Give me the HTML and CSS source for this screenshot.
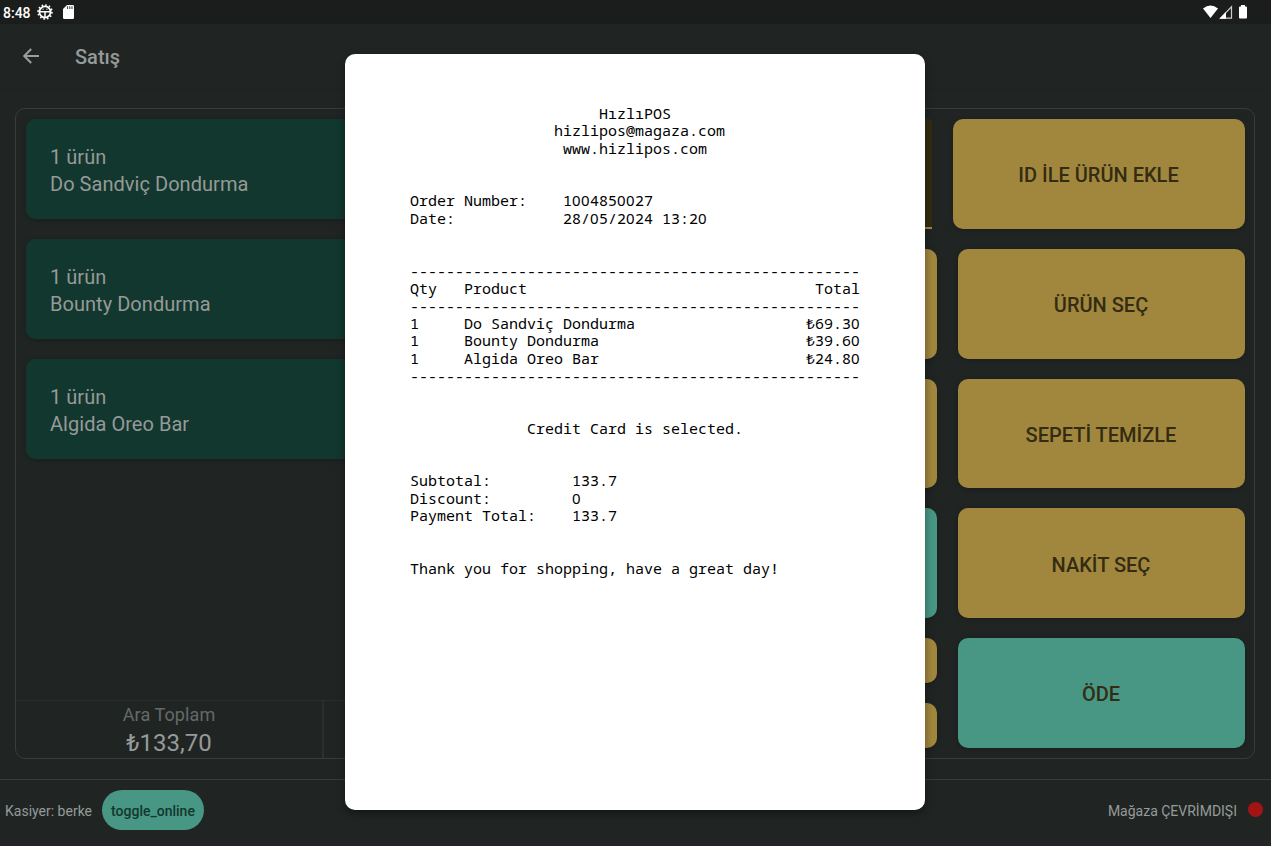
FILE: index.html
```html
<!DOCTYPE html>
<html lang="tr">
<head>
<meta charset="utf-8">
<title>Satış</title>
<link rel="stylesheet" href="styles.css">
</head>
<body>
<div class="app">
  <div class="status">
    <span class="clock">8:48</span>
    <svg class="gear" width="16" height="16" viewBox="0 0 16 16"><circle cx="8" cy="8" r="7" fill="none" stroke="#fff" stroke-width="1.600" stroke-dasharray="1.600 2.065"/><circle cx="8" cy="8" r="5.600" fill="none" stroke="#fff" stroke-width="1.800"/><path d="M2.500 7.800h11M8 8v5.500" stroke="#fff" stroke-width="1.500"/><path d="M5.500 5.200h1.200M9.300 5.200h1.200" stroke="#fff" stroke-width="1"/></svg>
    <svg class="sd" width="11" height="14" viewBox="0 0 11 14"><path d="M4 0h5.700Q11 0 11 1.300v11.400q0 1.300-1.300 1.300H1.300Q0 14 0 12.700V4z" fill="#fff"/><path d="M4.500 1.300v2.700M6.800 1.300v2.700M9 1.300v2.700" stroke="#444" stroke-width="1.100"/></svg>
    <svg class="signals" width="46" height="14" viewBox="0 0 46 14"><path d="M0 3.500Q7.500-2.500 15 3.500L7.500 13z" fill="#fff"/><path d="M17.500 13.200L28.500 1.800V13.200z" fill="none" stroke="#ccc" stroke-width="1.200"/><path d="M16.500 13.800L23 7v6.800z" fill="#fff"/><path d="M36 2.500q0-1 1-1h1V0h4v1.500h1q1 0 1 1v10q0 1-1 1h-6q-1 0-1-1z" fill="#fff"/></svg>
  </div>
  <header class="bar">
    <svg width="16" height="16" viewBox="0 0 16 16"><path d="M16 8H1.400M8.200 1L1.200 8l7 7" fill="none" stroke="#9a9d9c" stroke-width="2"/></svg>
    <h1>Satış</h1>
  </header>
  <main class="panel">
    <section class="cart">
      <div class="items">
        <div class="item">1 ürün<br>Do Sandviç Dondurma</div>
        <div class="item">1 ürün<br>Bounty Dondurma</div>
        <div class="item">1 ürün<br>Algida Oreo Bar</div>
      </div>
      <div class="totals">
        <div class="total"><span>Ara Toplam</span><b>₺133,70</b></div>
        <div class="total"></div>
      </div>
    </section>
    <section class="actions">
      <div class="row first"><div class="field"></div><div class="btn">ID İLE ÜRÜN EKLE</div></div>
      <div class="row"><div class="btn"></div><div class="btn">ÜRÜN SEÇ</div></div>
      <div class="row"><div class="btn"></div><div class="btn">SEPETİ TEMİZLE</div></div>
      <div class="row"><div class="btn teal"></div><div class="btn">NAKİT SEÇ</div></div>
      <div class="row"><div class="stack"><div class="btn"></div><div class="btn"></div></div><div class="btn teal">ÖDE</div></div>
    </section>
  </main>
  <footer class="foot">
    <span class="cashier">Kasiyer: berke</span>
    <span class="pill">toggle_online</span>
    <span class="store">Mağaza ÇEVRİMDIŞI</span>
    <i class="dot"></i>
  </footer>
  <div class="strip"></div>
</div>
<div class="overlay">
<div class="receipt">
  <section class="center">
    <p class="name">HızlıPOS</p>
    <p>hizlipos@magaza.com</p>
    <p class="site">www.hizlipos.com</p>
  </section>
  <section class="order">
    <p><span>Order Number:</span><span>1<i>00</i>485<i>00</i>27</span></p>
    <p><span>Date:</span><span>28/<i>0</i>5/2<i>0</i>24 13:2<i>0</i></span></p>
  </section>
  <section class="lines">
    <p class="rule">--------------------------------------------------</p>
    <p><span>Qty</span><span>Product</span><span>Total</span></p>
    <p class="rule">--------------------------------------------------</p>
    <p><span>1</span><span>Do Sandviç Dondurma</span><span>₺69.3<i>0</i></span></p>
    <p><span>1</span><span>Bounty Dondurma</span><span>₺39.6<i>0</i></span></p>
    <p><span>1</span><span>Algida Oreo Bar</span><span>₺24.8<i>0</i></span></p>
    <p class="rule">--------------------------------------------------</p>
  </section>
  <section class="pay"><p>Credit Card is selected.</p></section>
  <section class="sums">
    <p><span>Subtotal:</span><span>133.7</span></p>
    <p><span>Discount:</span><span><i>0</i></span></p>
    <p><span>Payment Total:</span><span>133.7</span></p>
  </section>
  <section><p>Thank you for shopping, have a great day!</p></section>
</div>
</div>
</body>
</html>
```
FILE: styles.css
```css
* { box-sizing: border-box; }
body { margin: 0; background: #202524; font-family: Roboto, sans-serif; color: #969a98; overflow: hidden; }
.app { height: 846px; display: flex; flex-direction: column; }
.status { height: 24px; flex: none; background: #1b1d1c; color: #fff; display: flex; align-items: center; padding: 0 22px 0 3px; }
.clock { font-size: 14px; font-weight: 500; line-height: 24px; padding-top: 1px; }
.gear { margin-left: 6px; }
.sd { margin-left: 10px; }
.signals { margin-left: auto; }
.bar { height: 65px; flex: none; display: flex; align-items: center; padding-left: 23px; border-bottom: 1px solid #1e2322; }
.bar h1 { margin: 2px 0 0 36px; font-size: 20px; font-weight: 500; line-height: 24px; }
.panel { flex: none; margin: 19px 16px 0 15px; height: 651px; border: 1px solid #363d3b; border-radius: 10px; display: flex; }
.cart { width: 614px; display: flex; flex-direction: column; }
.items { flex: 1; display: flex; flex-direction: column; gap: 20px; padding: 10px; }
.item { height: 100px; background: #12372e; border-radius: 9px; padding: 25px 24px 0; font-size: 20px; letter-spacing: .04px; line-height: 27px; box-shadow: 0 1px 5px rgba(0,0,0,.25); }
.totals { height: 58px; display: flex; border-top: 1px solid #2b302f; }
.total { flex: 1; display: flex; flex-direction: column; align-items: center; border-right: 2px solid #2b302f; }
.total:last-child { border-right: 0; }
.total span { font-size: 18px; line-height: 27px; color: #656a68; letter-spacing: .1px; }
.total b { font-size: 24px; font-weight: 400; line-height: 31px; }
.actions { flex: 1; display: flex; flex-direction: column; gap: 20px; padding: 10px 9.500px 10px 10px; }
.row { flex: 1; display: grid; grid-template-columns: 1fr 287px; gap: 20.500px; }
.row.first { grid-template-columns: 1fr 292px; }
.btn { background: #a1873e; color: #332c12; border-radius: 10px; display: flex; align-items: center; justify-content: center; padding-top: 2.800px; font-size: 20px; font-weight: 500; box-shadow: 0 1px 5px rgba(0,0,0,.25); }
.btn.teal { background: #479784; }
.field { background: #332c12; border-bottom: 2px solid #a1873e; border-radius: 4px 4px 0 0; }
.stack { display: grid; grid-template-rows: 1fr 1fr; gap: 20px; }
.foot { margin-top: 20px; height: 61px; flex: none; border-top: 1px solid #363d3b; display: flex; align-items: center; padding: 0 8px 0 5px; font-size: 14px; }
.cashier, .store { padding-top: 2px; }
.pill { margin-left: 10px; width: 102px; height: 40px; border-radius: 20px; background: #479784; color: #12372e; font-weight: 500; line-height: 42px; text-align: center; }
.store { margin-left: auto; }
.dot { margin: -2px 0 0 11px; width: 15px; height: 15px; border-radius: 50%; background: #a31515; }
.strip { height: 6px; background: #252429; }
.overlay { position: absolute; inset: 0; display: flex; justify-content: center; padding: 54px 1px 0 0; }
.receipt { width: 580px; height: 756px; background: #fff; border-radius: 10px; padding: 50.800px 65px 0; color: #000; font-family: "Droid Sans Mono", "Noto Sans Mono", "DejaVu Sans Mono", monospace; font-size: 15px; line-height: 17.500px; box-shadow: 0 4px 8px rgba(0,0,0,.4); display: flex; flex-direction: column; gap: 35px; }
.receipt p { margin: 0; height: 17.500px; white-space: pre; display: grid; }
/* columns sit on the 9px character grid */
.center { padding-left: 144px; }
.center .name { padding-left: 45px; }
.center .site { padding-left: 9px; }
.order p { grid-template-columns: 153px 1fr; }
.lines p { grid-template-columns: 54px 1fr auto; }
.lines .rule { grid-template-columns: 1fr; line-height: 18.500px; }
.pay { padding-left: 117px; }
.sums p { grid-template-columns: 162px 1fr; }
/* plain zero, padded to the 9px monospace advance */
.receipt i { font-family: "Noto Sans", sans-serif; font-style: normal; line-height: 1; letter-spacing: .420px; }
```
